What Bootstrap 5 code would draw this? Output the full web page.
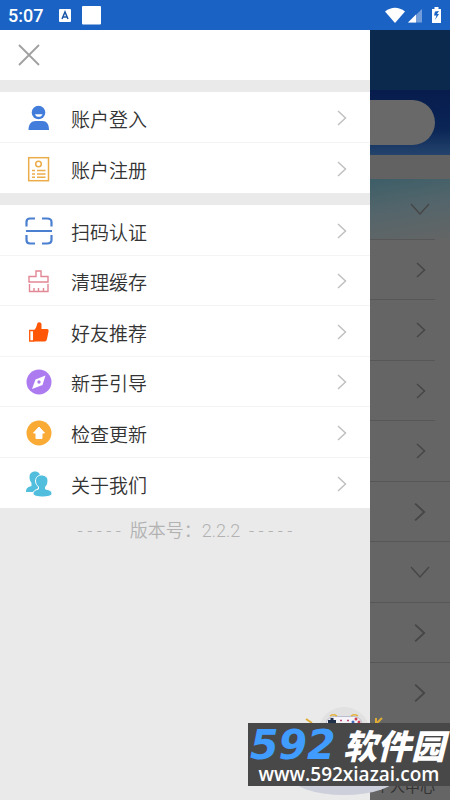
<!DOCTYPE html>
<html lang="zh-CN">
<head>
<meta charset="utf-8">
<meta name="viewport" content="width=device-width, initial-scale=1">
<title>菜单</title>
<link href="https://cdn.jsdelivr.net/npm/bootstrap@5.3.0/dist/css/bootstrap.min.css" rel="stylesheet">
<style>
body{font-family:Roboto,"Noto Sans CJK SC",sans-serif;background:#eaeaea;color:#333}
.status{height:30px;background:#1a63c4;color:#fff;font-size:18px;line-height:30px;padding:2px 8px 0}
.drawer{background:#eaeaea;min-width:0}
.close-bar{height:50px;background:#fff;padding-left:17px}
.group{margin-top:12px}
.group .entry{height:50px;padding:1px 23px 0 25px;border:0;border-radius:0;background:#fff;color:#333;font-size:19px;line-height:28px}
.group .entry:nth-child(odd){height:51px;border-bottom:1px solid #f4f4f4}
.group .entry:nth-child(even):not(:last-child){border-bottom:1px solid #f4f4f4}
.entry-icon{width:28px;height:28px;margin-right:18px;flex:none}
.entry-label{font-family:"Noto Sans CJK SC",sans-serif;font-weight:350;padding-top:2px}
.version{font-size:18px;line-height:24px;font-weight:350;color:#b2b2b2;padding-top:11px}
.behind{width:80px;flex:none;background:#656565}
.topbar{height:60px;background:#0a294c}
.hero{height:65px;background:linear-gradient(#071c4d,#0a2556 60%,#24446c)}
.search{height:45px;margin:10px 15px 0 0;border-radius:0 23px 23px 0;background:#696969}
.spacer{height:24px;background:#626262}
.line-item{height:61px;padding:0 15px 0 0;color:#464646}
.line-item:nth-child(even){height:60px}
.line-item>span{border-bottom:1px solid #575757;padding-right:5px}
.line-item.full{padding-right:0}
.line-item.full>span{padding-right:20px}
.line-item.sky{background:linear-gradient(170deg,#3d5e68,#53656b 45%,#646565)}
.tab-label{font-size:15px;line-height:20px;color:#333;padding:53px 0 0 5px}
.mascot{right:55px;bottom:0;width:100px;height:100px}
.stamp{right:0;bottom:14px;width:202px;height:63px;background:#484848;color:#fff}
.stamp-name{height:40px;line-height:40px;padding:4px 5px 0 2px}
.stamp-number{font:italic bold 41px/40px "DejaVu Sans",sans-serif;color:#409cff}
.stamp-word{font:italic 900 34px/40px "Noto Sans CJK SC",sans-serif}
.stamp-url{font:600 19px/22px "Open Sans",sans-serif}
</style>
<script src="https://cdn.jsdelivr.net/npm/bootstrap@5.3.0/dist/js/bootstrap.bundle.min.js"></script>
</head>
<body>
<svg class="d-none" aria-hidden="true">
<symbol id="next" viewBox="0 0 10 16"><path d="M1 1l7.500 7L1 15" fill="none" stroke="currentColor" stroke-width="1.500"/></symbol>
<symbol id="open" viewBox="0 0 20 12"><path d="M1 1l9 10 9-10" fill="none" stroke="currentColor" stroke-width="1.300"/></symbol>
</svg>
<div class="d-flex flex-column min-vh-100 position-relative overflow-hidden">
<header class="status d-flex align-items-center fw-medium">
<span>5:07</span>
<svg class="ms-3" width="12" height="14" viewBox="0 0 12 14"><rect width="12" height="13" rx="1" fill="#fff"/><path d="M3 10l3-7 3 7M4 8h4" fill="none" stroke="#1a55a8" stroke-width="1.500"/></svg>
<svg class="ms-2 me-auto" width="24" height="20" viewBox="0 0 24 20"><rect x="3" y="0" width="19" height="18.500" rx="1" fill="#fff"/></svg>
<svg width="58" height="20" viewBox="0 0 58 20"><path d="M1 5.500Q11 -2 21 5.500L11 17z" fill="#fff"/><path d="M24 16.500L38 3v13.500z" fill="#719ddb"/><path d="M24 16.500L32 8.500v8z" fill="#fff"/><path d="M48 3h2.500V1h4v2H57v14h-9z" fill="#fff"/><path d="M55 5l-4 .5-1 4h2.500L51 14l4-6h-2z" fill="#1a63c4"/></svg>
</header>
<main class="d-flex flex-grow-1">
<nav class="drawer flex-grow-1" aria-label="菜单">
<div class="close-bar d-flex align-items-center">
<button class="btn p-0 border-0 d-flex" type="button" aria-label="关闭"><svg width="24" height="24" viewBox="0 0 24 24"><path d="M2 2l20 20M22 2L2 22" fill="none" stroke="#a0a0a0" stroke-width="1.800"/></svg></button>
</div>
<div class="group list-group rounded-0">
<a href="#" class="entry list-group-item-action d-flex align-items-center text-decoration-none"><svg class="entry-icon" viewBox="0 0 28 28"><circle cx="13.500" cy="8.500" r="6.800" fill="#427ddb"/><path d="M3.500 26c0-6 3-9 7-9h7c4 0 6.500 3 6.500 9z" fill="#427ddb"/><path d="M10 10.300h7.500c-.8 3.400-6.700 3.400-7.500 0z" fill="#fff"/></svg><span class="entry-label flex-grow-1">账户登入</span><svg width="10" height="16" color="#c0c0c0"><use href="#next"/></svg></a>
<a href="#" class="entry list-group-item-action d-flex align-items-center text-decoration-none"><svg class="entry-icon" viewBox="0 0 28 28" fill="none" stroke="#ebac4a" stroke-width="1.500"><rect x="3.700" y="2.700" width="19.800" height="23"/><circle cx="13.500" cy="9" r="2.800"/><path d="M7 15.500h3m2 0h8.500M7 19h3m2 0h8.500M7 22.300h3m2 0h8.500"/></svg><span class="entry-label flex-grow-1">账户注册</span><svg width="10" height="16" color="#c0c0c0"><use href="#next"/></svg></a>
</div>
<div class="group list-group rounded-0">
<a href="#" class="entry list-group-item-action d-flex align-items-center text-decoration-none"><svg class="entry-icon" viewBox="0 0 28 28" fill="none" stroke="#4b7fd0" stroke-width="2.200"><path d="M1.500 9.500V5q0-3.500 3.500-3.500h5M17 1.500h5q4.500 0 4.500 3.500v4.500M1.500 18v5q0 3.500 3.500 3.500h5M17 26.500h5q4.500 0 4.500-3.500v-5M1 14h26"/></svg><span class="entry-label flex-grow-1">扫码认证</span><svg width="10" height="16" color="#c0c0c0"><use href="#next"/></svg></a>
<a href="#" class="entry list-group-item-action d-flex align-items-center text-decoration-none"><svg class="entry-icon" viewBox="0 0 28 28" fill="none" stroke="#e28794" stroke-width="1.400"><path d="M4 15v-5.500h7V4h5v5.500h7V15zM4.500 17v7.500H23V17M9 24v-3M13.500 24v-3M18.500 24v-3"/></svg><span class="entry-label flex-grow-1">清理缓存</span><svg width="10" height="16" color="#c0c0c0"><use href="#next"/></svg></a>
<a href="#" class="entry list-group-item-action d-flex align-items-center text-decoration-none"><svg class="entry-icon" viewBox="0 0 28 28"><path d="M8.500 12.500c3-2 3-5 4-7.500 1-1.500 4-1 4 1.500v4.500h5.500q2 0 1.500 2.500L22 21q-.5 2.500-2.500 2.500h-11z" fill="#ff5705"/><path d="M4.700 12.500h4v10.500h-4z" fill="#fff" stroke="#ff5705" stroke-width="1.300"/></svg><span class="entry-label flex-grow-1">好友推荐</span><svg width="10" height="16" color="#c0c0c0"><use href="#next"/></svg></a>
<a href="#" class="entry list-group-item-action d-flex align-items-center text-decoration-none"><svg class="entry-icon" viewBox="0 0 28 28"><circle cx="14" cy="14" r="12.500" fill="#ad7bf0"/><path d="M20.500 7.500l-3 9.500-10.500 4 3.500-9.500z" fill="#fff"/><circle cx="14" cy="14" r="1.700" fill="#ad7bf0"/></svg><span class="entry-label flex-grow-1">新手引导</span><svg width="10" height="16" color="#c0c0c0"><use href="#next"/></svg></a>
<a href="#" class="entry list-group-item-action d-flex align-items-center text-decoration-none"><svg class="entry-icon" viewBox="0 0 28 28"><circle cx="14" cy="14" r="12.500" fill="#f9ab36"/><path d="M14 8l5.500 6H17v5.500h-6V14H8.500z" fill="#fff" stroke="#fff" stroke-linejoin="round"/></svg><span class="entry-label flex-grow-1">检查更新</span><svg width="10" height="16" color="#c0c0c0"><use href="#next"/></svg></a>
<a href="#" class="entry list-group-item-action d-flex align-items-center text-decoration-none"><svg class="entry-icon" viewBox="0 0 28 28" fill="#52bedd"><path d="M4.500 7c0-7 10.500-7 10.500-1 0 4-1 6-2 8v4l-3 4H1c0-4 2-5 5.500-6v-3c-1.500-2-2-4-2-6z"/><path d="M10.500 11c0-8 12.500-8 12.500 0 0 3-1.500 5-2.500 6v2c4.500 1 6.500 2 6.500 5 0 4-19 4-19 0 0-3 2-4 5.500-5v-2c-1.500-2-3-3-3-6z" stroke="#fff" stroke-width="1"/></svg><span class="entry-label flex-grow-1">关于我们</span><svg width="10" height="16" color="#c0c0c0"><use href="#next"/></svg></a>
</div>
<div class="version text-center">- - - - -&nbsp; 版本号：2.2.2&nbsp; - - - - -</div>
</nav>
<section class="behind" aria-label="首页">
<div class="topbar"></div>
<div class="hero d-flex flex-column"><div class="search"></div></div>
<div class="spacer"></div>
<div class="d-flex flex-column">
<div class="line-item sky d-flex"><span class="flex-grow-1 d-flex align-items-center justify-content-end"><svg width="20" height="12"><use href="#open"/></svg></span></div>
<div class="line-item d-flex"><span class="flex-grow-1 d-flex align-items-center justify-content-end"><svg class="me-1" width="10" height="16"><use href="#next"/></svg></span></div>
<div class="line-item d-flex"><span class="flex-grow-1 d-flex align-items-center justify-content-end"><svg class="me-1" width="10" height="16"><use href="#next"/></svg></span></div>
<div class="line-item d-flex"><span class="flex-grow-1 d-flex align-items-center justify-content-end"><svg class="me-1" width="10" height="16"><use href="#next"/></svg></span></div>
<div class="line-item full d-flex"><span class="flex-grow-1 d-flex align-items-center justify-content-end"><svg class="me-1" width="10" height="16"><use href="#next"/></svg></span></div>
<div class="line-item full d-flex"><span class="flex-grow-1 d-flex align-items-center justify-content-end"><svg class="me-1" width="12" height="20"><use href="#next"/></svg></span></div>
<div class="line-item full d-flex"><span class="flex-grow-1 d-flex align-items-center justify-content-end"><svg width="20" height="12"><use href="#open"/></svg></span></div>
<div class="line-item full d-flex"><span class="flex-grow-1 d-flex align-items-center justify-content-end"><svg class="me-1" width="12" height="20"><use href="#next"/></svg></span></div>
<div class="line-item full d-flex"><span class="flex-grow-1 d-flex align-items-center justify-content-end"><svg class="me-1" width="12" height="20"><use href="#next"/></svg></span></div>
</div>
<div class="tab-label text-nowrap">个人中心</div>
</section>
</main>
<svg class="mascot position-absolute" viewBox="0 0 100 100"><ellipse cx="49" cy="75" rx="54" ry="20" fill="#cdcfda"/><circle cx="49" cy="33" r="26" fill="#e1e1e2"/><rect x="31" y="16.500" width="36" height="18" rx="8" fill="#f3f3f8" stroke="#bbbcd0"/><path d="M35 16q3.500-2.500 7 0M56 16q3.500-2.500 7 0" fill="none" stroke="#e4b43c" stroke-width="1.500"/><path d="M37 18v6M33 21.500h8" stroke="#20304b" stroke-width="3"/><path d="M45 20.500h2M52 20.500h2" stroke="#c14c76" stroke-width="1.500"/><circle cx="61" cy="19" r="1.500" fill="#d03e53"/><circle cx="58" cy="22" r="1.500" fill="#3e67bd"/><circle cx="64" cy="22" r="1.500" fill="#d03e53"/><path d="M11 19l6 4M14 24h5M87 18l-5 5M81 18v6" stroke="#dfad36" stroke-width="2"/></svg>
<div class="stamp position-absolute d-flex flex-column align-items-center">
<div class="stamp-name d-flex align-items-center align-self-stretch justify-content-between text-nowrap"><span class="stamp-number">592</span><span class="stamp-word">软件园</span></div>
<div class="stamp-url">www.592xiazai.com</div>
</div>
</div>
</body>
</html>
